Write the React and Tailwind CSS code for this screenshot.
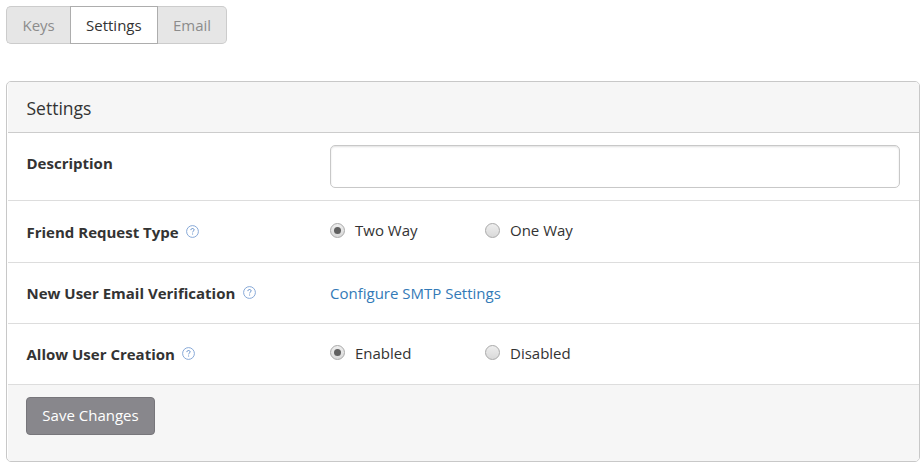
import React from "react";

function Help() {
  return (
    <svg className="relative -top-px ml-[7.5px] h-[13px] w-[13px] shrink-0" viewBox="0 0 13 13" fill="none">
      <circle cx="6.5" cy="6.5" r="5.9" stroke="#7a9fd2" strokeWidth="0.9" />
      <path d="M4.9 5.1c0-1 .7-1.6 1.6-1.6s1.6.6 1.6 1.4c0 1.1-1.5 1.2-1.5 2.4" stroke="#5f8cc8" strokeWidth="1" />
      <path d="M6.1 8.6h1v1h-1z" fill="#5f8cc8" />
    </svg>
  );
}

function Radio({ label, checked, dotClass = "" }) {
  return (
    <label className="flex w-[155px] items-center">
      <span className={`flex h-[15px] w-[15px] items-center justify-center rounded-full border border-[#a9a9a9] bg-linear-to-b from-[#eeeeee] to-[#d9d9d9] ${dotClass}`}>
        {checked && <span className="h-[7px] w-[7px] rounded-full bg-[#606060]" />}
      </span>
      <span className="ml-[10px] leading-5">{label}</span>
    </label>
  );
}

function Row({ label, help, className, labelClass, children }) {
  return (
    <div className={`flex border-b border-[#dddddd] pl-[18px] pr-[19px] ${className}`}>
      <div className={`flex w-[304px] shrink-0 items-center self-start pl-[0.5px] font-bold leading-5 ${labelClass}`}>
        {label}
        {help && <Help />}
      </div>
      {children}
    </div>
  );
}

export default function App() {
  return (
    <div className="h-[467px] w-[924px] overflow-hidden bg-white pl-[6px] pt-[6px] font-['Open_Sans','Noto_Sans',sans-serif] text-[15px] text-[#333333]">
      <nav className="flex h-[38px] w-[221px] leading-[37px] text-[#8c8c8c]">
        <a className="w-16 rounded-l-[5px] border border-r-0 border-[#cccccc] bg-[#e6e6e6] pl-[15.5px]">Keys</a>
        <a className="w-[88px] border border-[#adadad] bg-white pl-[15px] text-[#333333]">Settings</a>
        <a className="w-[69px] rounded-r-[5px] border border-l-0 border-[#cccccc] bg-[#e6e6e6] pl-[15px]">Email</a>
      </nav>

      <section className="mt-[37px] h-[381px] w-[914px] overflow-hidden rounded-[5px] border border-[#c8c8c8] bg-white pl-px">
        <h2 className="h-[51px] border-b border-[#cccccc] bg-[#f6f6f6] pl-[18.5px] text-[17.5px] leading-[52px]">Settings</h2>
        <Row label="Description" className="h-[68px]" labelClass="mt-5">
          <input className="mt-3 h-[43px] w-[570px] rounded-[5px] border border-[#c8c8c8] bg-white px-3 shadow-[inset_0_1px_2px_rgba(0,0,0,0.12)] outline-none" />
        </Row>
        <Row label="Friend Request Type" help className="h-[62px]" labelClass="mt-[21px]">
          <div className="mt-[19px] flex self-start">
            <Radio label="Two Way" checked />
            <Radio label="One Way" />
          </div>
        </Row>
        <Row label="New User Email Verification" help className="h-[61px]" labelClass="mt-5">
          <a className="mt-5 leading-5 text-[#337ab7]">Configure SMTP Settings</a>
        </Row>
        <Row label="Allow User Creation" help className="h-[61px]" labelClass="mt-5">
          <div className="mt-[19px] flex self-start">
            <Radio label="Enabled" checked dotClass="mb-[2px]" />
            <Radio label="Disabled" dotClass="mb-[2px]" />
          </div>
        </Row>
        <div className="h-[76px] bg-[#f6f6f6] pl-[18px] pt-3">
          <button className="h-[38px] w-[129px] rounded-[4px] border border-[#77767b] bg-[#88878c] pb-[2px] text-white">Save Changes</button>
        </div>
      </section>
    </div>
  );
}
